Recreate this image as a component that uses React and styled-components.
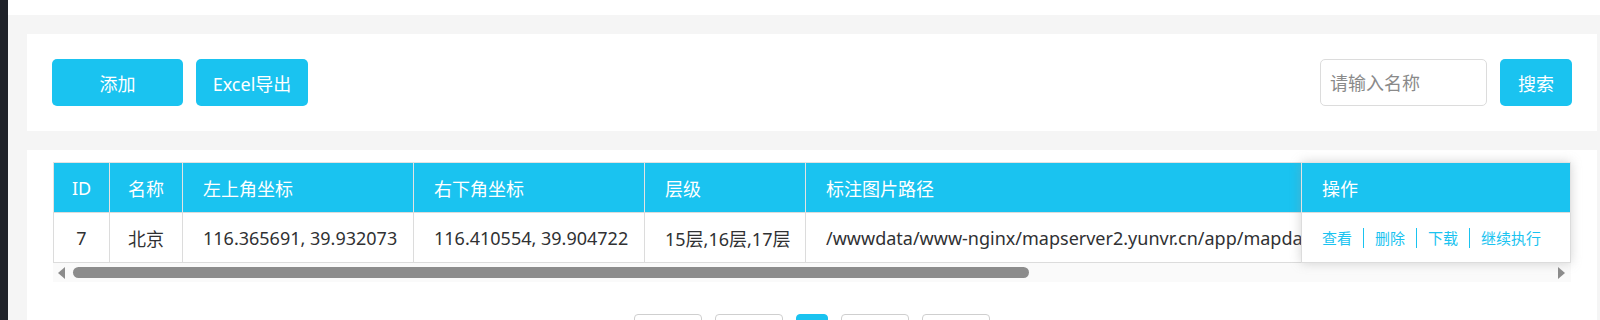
import React from "react";
import styled, { createGlobalStyle } from "styled-components";

const BLUE = "#1ac3f0";
const FONT = `"Noto Sans", "Noto Sans CJK SC", sans-serif`;

const GlobalStyle = createGlobalStyle`
	body {
		margin: 0;
		background: #fff;
		font-family: ${FONT};
		color: #333;
	}
`;

const columns = [
	{ key: "id", title: "ID", width: 56, center: true },
	{ key: "name", title: "名称", width: 73, center: true },
	{ key: "lt", title: "左上角坐标", width: 231 },
	{ key: "rb", title: "右下角坐标", width: 231 },
	{ key: "level", title: "层级", width: 161 },
	{ key: "path", title: "标注图片路径", width: 760 },
	{ key: "op", title: "操作", width: 270 },
];

const rows = [
	{
		id: 7,
		name: "北京",
		lt: "116.365691, 39.932073",
		rb: "116.410554, 39.904722",
		level: "15层,16层,17层",
		path: "/wwwdata/www-nginx/mapserver2.yunvr.cn/app/mapdata/beijing/marker.png",
	},
];

const actions = ["查看", "删除", "下载", "继续执行"];
const pages = [68, 68, 32, 68, 68];

const App = () => {
	return (
		<>
			<GlobalStyle />
			<Layout>
				<SideBar />
				<Main>
					<TopStrip />
					<Content>
						<ToolCard>
							<ToolGroup>
								<Button $width={131}>添加</Button>
								<Button $width={112}>Excel导出</Button>
							</ToolGroup>
							<ToolGroup>
								<SearchInput placeholder="请输入名称" />
								<Button $width={72}>搜索</Button>
							</ToolGroup>
						</ToolCard>
						<TableCard>
							<TableWrap>
								<ScrollArea>
									<Table>
										<colgroup>
											{columns.map((c) => (
												<col key={c.key} style={{ width: c.width }} />
											))}
										</colgroup>
										<thead>
											<tr>
												{columns.map((c) => (
													<Th key={c.key} $center={c.center}>
														{c.key === "op" ? "" : c.title}
													</Th>
												))}
											</tr>
										</thead>
										<tbody>
											{rows.map((r) => (
												<tr key={r.id}>
													{columns.map((c) => (
														<Td key={c.key} $center={c.center}>
															{r[c.key]}
														</Td>
													))}
												</tr>
											))}
										</tbody>
									</Table>
								</ScrollArea>
								<FixedColumn>
									<FixedHead>操作</FixedHead>
									{rows.map((r) => (
										<FixedCell key={r.id}>
											{actions.map((a, i) => (
												<React.Fragment key={a}>
													{i > 0 && <Divider />}
													<ActionLink>{a}</ActionLink>
												</React.Fragment>
											))}
										</FixedCell>
									))}
								</FixedColumn>
								<ScrollBar>
									<Arrow $dir="left" />
									<Track>
										<Thumb />
									</Track>
									<Arrow $dir="right" />
								</ScrollBar>
							</TableWrap>
							<Pager>
								{pages.map((w, i) => (
									<PageBtn key={i} $width={w} $active={i === 2} />
								))}
							</Pager>
						</TableCard>
					</Content>
				</Main>
			</Layout>
		</>
	);
};

export default App;

const Layout = styled.div`
	display: flex;
	width: 1600px;
	height: 320px;
	overflow: hidden;
`;

const SideBar = styled.div`
	width: 8px;
	flex-shrink: 0;
	background: #1f2229;
`;

const Main = styled.div`
	flex: 1;
	min-width: 0;
	display: flex;
	flex-direction: column;
`;

const TopStrip = styled.div`
	height: 15px;
	background: #fff;
	flex-shrink: 0;
`;

const Content = styled.div`
	flex: 1;
	min-width: 0;
	background: #f5f5f5;
	padding: 19px 3px 0 19px;
	display: flex;
	flex-direction: column;
	row-gap: 19px;
`;

const ToolCard = styled.div`
	background: #fff;
	height: 97px;
	flex-shrink: 0;
	box-sizing: border-box;
	padding: 25px;
	display: flex;
	justify-content: space-between;
	align-items: center;
`;

const ToolGroup = styled.div`
	display: flex;
	column-gap: 13px;
	align-items: center;
`;

const Button = styled.button`
	width: ${(p) => p.$width}px;
	height: 47px;
	border: none;
	border-radius: 5px;
	background: ${BLUE};
	color: #fff;
	font-family: ${FONT};
	font-size: 18px;
	padding: 0;
	cursor: pointer;
`;

const SearchInput = styled.input`
	width: 167px;
	height: 47px;
	box-sizing: border-box;
	border: 1px solid #dcdcdc;
	border-radius: 5px;
	padding: 0 9px;
	font-family: ${FONT};
	font-size: 18px;
	color: #333;
	outline: none;
	&::placeholder {
		color: #8a8a8a;
	}
`;

const TableCard = styled.div`
	flex: 1;
	min-width: 0;
	background: #fff;
	padding: 12px 26px 0 26px;
`;

const TableWrap = styled.div`
	position: relative;
	min-width: 0;
`;

const ScrollArea = styled.div`
	overflow: hidden;
	width: 100%;
`;

const Table = styled.table`
	border-collapse: collapse;
	table-layout: fixed;
	width: 1782px;
	font-size: 18px;
`;

const Th = styled.th`
	height: 49px;
	padding: 0 0 0 ${(p) => (p.$center ? 0 : 20)}px;
	background: ${BLUE};
	color: #fff;
	font-weight: normal;
	text-align: ${(p) => (p.$center ? "center" : "left")};
	border: 1px solid #e3e3e3;
	border-bottom-color: #dcdcdc;
	white-space: nowrap;
`;

const Td = styled.td`
	height: 49px;
	padding: 0 0 0 ${(p) => (p.$center ? 0 : 20)}px;
	color: #303133;
	text-align: ${(p) => (p.$center ? "center" : "left")};
	border: 1px solid #dcdcdc;
	white-space: nowrap;
	overflow: hidden;
`;

const FixedColumn = styled.div`
	position: absolute;
	top: 0;
	right: 0;
	width: 270px;
	background: #fff;
	box-shadow: 0 0 10px rgba(150, 150, 150, 0.4);
`;

const FixedHead = styled.div`
	height: 51px;
	box-sizing: border-box;
	background: ${BLUE};
	color: #fff;
	font-size: 18px;
	display: flex;
	align-items: center;
	padding-left: 20px;
	border: 1px solid #e3e3e3;
	border-bottom-color: #dcdcdc;
`;

const FixedCell = styled.div`
	height: 50px;
	box-sizing: border-box;
	display: flex;
	align-items: center;
	column-gap: 11px;
	padding-left: 20px;
	border: 1px solid #dcdcdc;
	border-top: none;
`;

const ActionLink = styled.a`
	color: ${BLUE};
	font-size: 15px;
	line-height: 20px;
	cursor: pointer;
`;

const Divider = styled.span`
	width: 1px;
	height: 20px;
	background: ${BLUE};
`;

const ScrollBar = styled.div`
	height: 19px;
	background: #fafafa;
	display: flex;
	align-items: center;
	padding: 0 6px 0 5px;
	column-gap: 8px;
`;

const Arrow = styled.div`
	width: 0;
	height: 0;
	border-top: 6px solid transparent;
	border-bottom: 6px solid transparent;
	${(p) =>
		p.$dir === "left"
			? "border-right: 7px solid #8c8c8c;"
			: "border-left: 7px solid #8c8c8c;"}
`;

const Track = styled.div`
	flex: 1;
	height: 11px;
`;

const Thumb = styled.div`
	width: 956px;
	height: 11px;
	border-radius: 6px;
	background: #8c8c8c;
`;

const Pager = styled.div`
	margin-top: 32px;
	display: flex;
	justify-content: center;
	column-gap: 13px;
`;

const PageBtn = styled.div`
	width: ${(p) => p.$width}px;
	height: 34px;
	box-sizing: border-box;
	border-radius: 4px;
	border: 1px solid ${(p) => (p.$active ? BLUE : "#cfcfcf")};
	background: ${(p) => (p.$active ? BLUE : "#fff")};
`;
